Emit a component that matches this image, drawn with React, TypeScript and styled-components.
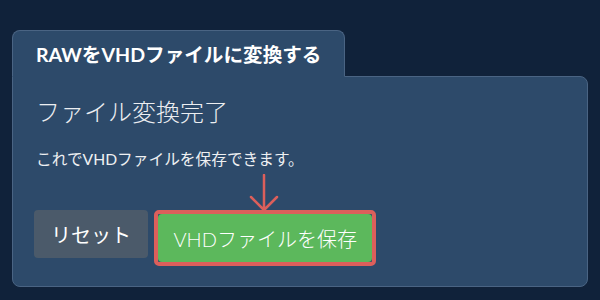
import React from "react";
import styled, { createGlobalStyle } from "styled-components";

const GlobalStyle = createGlobalStyle`
  html, body {
    margin: 0;
    padding: 0;
    background: #10223a;
  }
  body {
    font-family: "Lato", "Noto Sans CJK JP", sans-serif;
    color: #ffffff;
  }
`;

const Page = styled.div`
  width: 600px;
  height: 300px;
  box-sizing: border-box;
  padding: 30px 12px 0 12px;
  background: #10223a;
`;

const Card = styled.section`
  display: flex;
  flex-direction: column;
  width: 576px;
`;

const Tab = styled.div`
  position: relative;
  z-index: 1;
  align-self: flex-start;
  box-sizing: border-box;
  width: 333px;
  height: 47px;
  margin-bottom: -1px;
  padding: 0 0 0 23px;
  display: flex;
  align-items: center;
  background: #2d4a6a;
  border: 1px solid #4a6483;
  border-bottom: 1px solid #2d4a6a;
  border-radius: 8px 8px 0 0;
  font-size: 19.6px;
  font-weight: 700;
  color: #ffffff;
`;

const Panel = styled.div`
  box-sizing: border-box;
  height: 211px;
  padding: 19px 21px 20px 23px;
  background: #2d4a6a;
  border: 1px solid #4a6483;
  border-radius: 0 8px 8px 8px;
  display: flex;
  flex-direction: column;
`;

const Heading = styled.h2`
  margin: 0;
  font-size: 24px;
  line-height: 32px;
  font-weight: 300;
  color: #eceef1;
`;

const Message = styled.p`
  margin: 20px 0 0 0;
  font-size: 15.7px;
  line-height: 22px;
  color: #eef0f2;
`;

const Actions = styled.div`
  margin-top: 40px;
  display: flex;
  align-items: flex-start;
  gap: 6px;
  margin-left: -2px;
`;

const Button = styled.button<{ $variant: "reset" | "save" }>`
  box-sizing: border-box;
  height: 48px;
  padding: 0 ${(p) => (p.$variant === "save" ? "15.5px" : "17px")};
  border: none;
  border-radius: 4px;
  font-family: "Lato", "Noto Sans CJK JP", sans-serif;
  font-size: 20px;
  font-weight: ${(p) => (p.$variant === "save" ? 300 : 400)};
  color: #ffffff;
  background: ${(p) => (p.$variant === "save" ? "#5cb85c" : "#4b5a6a")};
  cursor: pointer;
`;

const Highlight = styled.div`
  position: relative;
  border: 4px solid #dc5f5b;
  border-radius: 5px;
  display: flex;
`;

const Pointer = styled.svg`
  position: absolute;
  left: 50%;
  bottom: calc(100% + 2px);
  transform: translateX(-50%);
  margin-left: -1px;
`;

export default function App() {
  return (
    <>
      <GlobalStyle />
      <Page>
        <Card>
          <Tab>RAWをVHDファイルに変換する</Tab>
          <Panel>
            <Heading>ファイル変換完了</Heading>
            <Message>これでVHDファイルを保存できます。</Message>
            <Actions>
              <Button $variant="reset">リセット</Button>
              <Highlight>
                <Pointer width="30" height="38" viewBox="0 0 30 38" fill="none">
                  <path
                    d="M15 1 V36 M2 23 L15 36 L28 23"
                    stroke="#dc5f5b"
                    strokeWidth="2.5"
                    strokeLinecap="round"
                    strokeLinejoin="round"
                  />
                </Pointer>
                <Button $variant="save">VHDファイルを保存</Button>
              </Highlight>
            </Actions>
          </Panel>
        </Card>
      </Page>
    </>
  );
}
